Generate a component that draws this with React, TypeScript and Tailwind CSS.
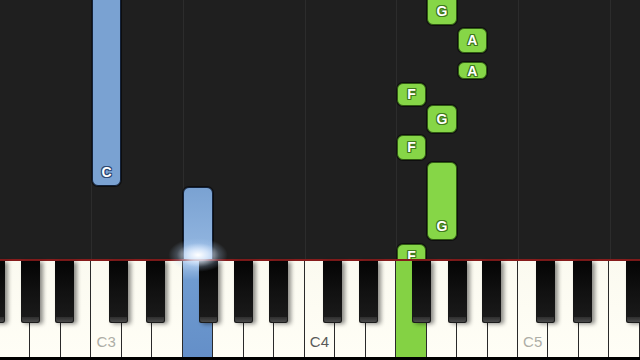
import type { CSSProperties } from 'react'

const W = 640 / 21
const NAMES = ['G', 'A', 'B', 'C', 'D', 'E', 'F']
// black key centre offset from the white-key boundary it sits on
const SHARP_OFFSET: Record<string, number> = { C: -3, D: 3, F: -5, G: 0, A: 4 }

const whiteKeys = Array.from({ length: 21 }, (_, i) => {
  const name = NAMES[i % 7]
  const octave = i < 3 ? 2 : Math.floor((i - 3) / 7) + 3
  return { i, name, octave }
})

const blackKeys: number[] = [-5]
whiteKeys.forEach((k) => {
  if (k.name in SHARP_OFFSET) blackKeys.push((k.i + 1) * W + SHARP_OFFSET[k.name])
})

type Note = { key: number; top: number; bottom: number; color: 'blue' | 'green' | 'active'; label?: string }

const notes: Note[] = [
  { key: 3, top: -10, bottom: 186, color: 'blue', label: 'C' },
  { key: 6, top: 187, bottom: 300, color: 'active' },
  { key: 14, top: -10, bottom: 25, color: 'green', label: 'G' },
  { key: 15, top: 27.5, bottom: 52.5, color: 'green', label: 'A' },
  { key: 15, top: 62, bottom: 79, color: 'green', label: 'A' },
  { key: 13, top: 82.5, bottom: 106, color: 'green', label: 'F' },
  { key: 14, top: 105, bottom: 133, color: 'green', label: 'G' },
  { key: 13, top: 135, bottom: 159.5, color: 'green', label: 'F' },
  { key: 14, top: 161.5, bottom: 240, color: 'green', label: 'G' },
  { key: 13, top: 243.5, bottom: 268, color: 'green', label: 'F' },
]

const noteStyles = {
  blue: 'bg-[#7aa2d2] border-[#12213a] [text-shadow:1px_0_#2c4a75,-1px_0_#2c4a75,0_1px_#2c4a75,0_-1px_#2c4a75,1px_1px_#2c4a75,-1px_-1px_#2c4a75,1px_-1px_#2c4a75,-1px_1px_#2c4a75]',
  green: 'bg-[#86d647] border-[#2f5a12] [text-shadow:1px_0_#3f7a1c,-1px_0_#3f7a1c,0_1px_#3f7a1c,0_-1px_#3f7a1c,1px_1px_#3f7a1c,-1px_-1px_#3f7a1c,1px_-1px_#3f7a1c,-1px_1px_#3f7a1c]',
  active: 'bg-gradient-to-b from-[#7aa2d2] via-[#8fb3de] to-[#cfe0f5] border-[#12213a]',
}

function NoteBar({ note }: { note: Note }) {
  const h = note.bottom - note.top
  const center = Math.min(14, h / 2)
  const style: CSSProperties = { left: note.key * W + 0.5, width: W - 1, top: note.top, height: h }
  return (
    <div
      className={`absolute rounded-[6px] border shadow-[0_0_0_1px_rgba(0,0,0,0.55)] ${noteStyles[note.color]}`}
      style={style}
    >
      {note.label && (
        <span
          className="absolute inset-x-0 text-center text-[14px] leading-[14px] font-bold text-white"
          style={{ bottom: center - 8 }}
        >
          {note.label}
        </span>
      )}
    </div>
  )
}

export default function App() {
  return (
    <div className="relative w-[640px] h-[360px] overflow-hidden bg-[#1f1f1f] flex flex-col font-['Liberation_Sans',Arial,sans-serif]">
      {/* note roll */}
      <div className="relative h-[259px] flex-none overflow-hidden">
        {[3, 6, 10, 13, 17, 20].map((i) => (
          <div key={i} className="absolute top-0 bottom-0 w-px bg-[#2c2c2c]" style={{ left: i * W }} />
        ))}
        {notes.map((n, idx) => (
          <NoteBar key={idx} note={n} />
        ))}
      </div>

      <div className="h-[2px] flex-none bg-[#861c1c]" />

      {/* keyboard */}
      <div className="relative flex flex-1 bg-black pb-[3px]">
        {whiteKeys.map((k) => {
          const lit = k.i === 6 ? 'blue' : k.i === 13 ? 'green' : null
          return (
            <div
              key={k.i}
              className={`relative flex-1 flex items-end justify-center pb-[8px] border-r border-[#2a2a2a] ${
                lit === 'blue'
                  ? 'bg-gradient-to-b from-[#a9c7ea] via-[#6f9bd0] via-[20%] to-[#648fc8]'
                  : lit === 'green'
                  ? 'bg-[#84d244]'
                  : 'bg-gradient-to-b from-[#fbfaf0] to-[#fffef6]'
              }`}
            >
              {k.name === 'C' && (
                <span className={`text-[15px] leading-none ${k.octave === 4 ? 'text-[#5a5a58]' : 'text-[#aeaea6]'}`}>
                  {k.name}
                  {k.octave}
                </span>
              )}
            </div>
          )
        })}
        {blackKeys.map((c, idx) => (
          <div
            key={idx}
            className="absolute top-0 h-[62px] w-[19px] rounded-b-[2px] bg-gradient-to-b from-[#050505] via-[#111] to-[#1c1c1c] shadow-[3px_1px_4px_rgba(0,0,0,0.45)] flex flex-col justify-end"
            style={{ left: c - 9.5 }}
          >
            <div className="h-[5px] mx-[1px] mb-[1px] rounded-b-[2px] bg-gradient-to-b from-[#2e2e2e] to-[#4a4a4a]" />
          </div>
        ))}
      </div>

      {/* glow where the blue note hits the key */}
      <div className="absolute left-[168px] top-[238px] w-[60px] h-[34px] rounded-full bg-[radial-gradient(ellipse_at_center,rgba(255,255,255,1)_0%,rgba(225,238,255,0.8)_25%,rgba(180,210,245,0.25)_50%,transparent_70%)]" />
    </div>
  )
}
